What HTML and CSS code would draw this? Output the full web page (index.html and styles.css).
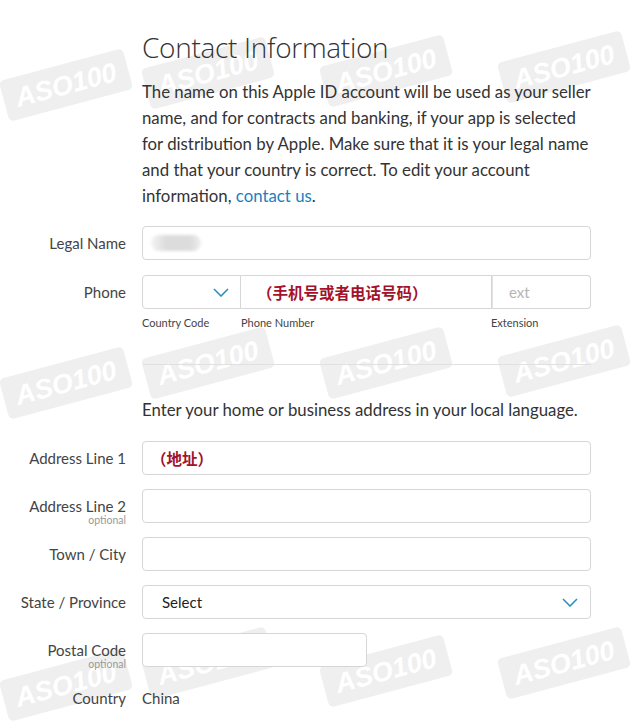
FILE: index.html
```html
<!DOCTYPE html>
<html lang="en">
<head>
    <meta charset="UTF-8">
    <meta name="viewport" content="width=device-width, initial-scale=1.0">
    <title>Contact Information</title>
    <link rel="stylesheet" href="styles.css">
</head>
<body>
    <div class="page">
        <div class="intro">
            <h1>Contact Information</h1>
            <p>The name on this Apple ID account will be used as your seller name, and for contracts and banking, if your app is selected for distribution by Apple. Make sure that it is your legal name and that your country is correct. To edit your account information, <a href="#">contact&nbsp;us</a>.</p>
        </div>

        <div class="form">
            <label class="label">Legal Name</label>
            <div class="field"><span class="blur"></span></div>

            <label class="label">Phone</label>
            <div class="phone">
                <div class="field phone-code">
                    <svg class="chevron" width="16" height="9" viewBox="0 0 16 9"><polyline points="1,1 8,8 15,1" fill="none" stroke="#2d8fc6" stroke-width="1.6"/></svg>
                </div>
                <div class="field phone-number"><span class="red">（手机号或者电话号码）</span></div>
                <div class="field phone-ext"><span class="placeholder">ext</span></div>
            </div>
            <span></span>
            <div class="phone-hints">
                <span class="hint-code">Country Code</span>
                <span class="hint-number">Phone Number</span>
                <span class="hint-ext">Extension</span>
            </div>
        </div>

        <hr class="divider">

        <p class="address-note">Enter your home or business address in your local language.</p>

        <div class="form address">
            <label class="label">Address Line 1</label>
            <div class="field"><span class="red">（地址）</span></div>

            <label class="label">Address Line 2<small>optional</small></label>
            <div class="field"></div>

            <label class="label">Town / City</label>
            <div class="field"></div>

            <label class="label">State / Province</label>
            <div class="field select">
                <span>Select</span>
                <svg class="chevron" width="16" height="9" viewBox="0 0 16 9"><polyline points="1,1 8,8 15,1" fill="none" stroke="#2d8fc6" stroke-width="1.6"/></svg>
            </div>

            <label class="label">Postal Code<small>optional</small></label>
            <div class="field postal"></div>

            <label class="label">Country</label>
            <div class="value">China</div>
        </div>
    </div>

    <div class="marks">
        <span class="mark" style="left:2px;top:64px">ASO100</span>
        <span class="mark" style="left:144px;top:52px">ASO100</span>
        <span class="mark" style="left:322px;top:50px">ASO100</span>
        <span class="mark" style="left:500px;top:46px">ASO100</span>
        <span class="mark" style="left:2px;top:362px">ASO100</span>
        <span class="mark" style="left:144px;top:342px">ASO100</span>
        <span class="mark" style="left:322px;top:342px">ASO100</span>
        <span class="mark" style="left:500px;top:340px">ASO100</span>
        <span class="mark" style="left:2px;top:664px">ASO100</span>
        <span class="mark" style="left:144px;top:642px">ASO100</span>
        <span class="mark" style="left:322px;top:650px">ASO100</span>
        <span class="mark" style="left:500px;top:642px">ASO100</span>
    </div>
</body>
</html>
```

FILE: styles.css
```css
body {
    margin: 0;
    background: #fff;
    color: #333;
    font-family: 'Lato', 'Noto Sans CJK SC', sans-serif;
    font-size: 16px;
}

.page {
    width: 591px;
    padding-top: 28px;
    position: relative;
    z-index: 1;
}

.intro {
    margin-left: 142px;
}

h1 {
    margin: 0;
    font-family: 'Open Sans', sans-serif;
    font-weight: 300;
    font-size: 28px;
    line-height: 38px;
    color: #333;
    letter-spacing: -0.3px;
}

.intro p {
    margin: 13px 0 0;
    font-size: 16.8px;
    line-height: 26px;
    color: #333;
}

.intro a {
    color: #1b7fbd;
    text-decoration: none;
}

.form {
    display: grid;
    grid-template-columns: 126px 449px;
    column-gap: 16px;
    row-gap: 15px;
    align-items: start;
}

.form.address {
    row-gap: 14px;
}

.intro + .form {
    margin-top: 17px;
}

.label {
    height: 34px;
    text-align: right;
    font-size: 15px;
    line-height: 34px;
    color: #444;
}

.label small {
    display: block;
    margin-top: -9px;
    font-size: 10.5px;
    line-height: 12px;
    color: #999;
}

.field {
    box-sizing: border-box;
    height: 34px;
    border: 1px solid #d6d6d6;
    border-radius: 4px;
    background: #fff;
    display: flex;
    align-items: center;
    padding: 0 8px;
}

.blur {
    width: 50px;
    height: 16px;
    border-radius: 8px;
    background: linear-gradient(90deg, #f4f4f4 0%, #dcdcdc 30%, #dcdcdc 80%, #efefef 100%);
    filter: blur(1.5px);
}

.red {
    color: #a3112b;
    font-weight: bold;
    font-family: 'Noto Sans CJK SC', sans-serif;
    font-size: 15.5px;
}

.phone {
    display: flex;
}

.phone .field {
    border-radius: 0;
}

.phone-code {
    width: 99px;
    border-radius: 4px 0 0 4px !important;
    justify-content: flex-end;
    padding-right: 11px;
}

.phone-number {
    width: 251px;
    border-left: none;
    padding-left: 16px;
}

.phone-ext {
    flex: 1;
    border-left: 1px solid #e2e2e2;
    border-radius: 0 4px 4px 0 !important;
    padding-left: 16px;
}

.phone-ext .placeholder {
    color: #b5b5b5;
    font-size: 15px;
}

.phone-hints {
    display: flex;
    font-size: 11px;
    color: #444;
    margin-top: -8px;
}

.hint-code {
    width: 99px;
}

.hint-number {
    width: 250px;
}

.divider {
    margin: 35px 0 0 143px;
    width: 448px;
    border: none;
    border-top: 1px solid #e0e0e0;
}

.address-note {
    margin: 35px 0 21px 142px;
    font-size: 16.8px;
    line-height: 20px;
}

.select {
    justify-content: space-between;
    padding: 0 12px 0 19px;
    font-size: 15px;
    color: #222;
}

.postal {
    width: 225px;
}

.value {
    font-size: 15px;
    line-height: 34px;
    color: #444;
}

.marks {
    position: absolute;
    inset: 0;
    pointer-events: none;
    z-index: 0;
}

.mark {
    position: absolute;
    width: 128px;
    height: 42px;
    line-height: 42px;
    text-align: center;
    background: #efefef;
    color: #fff;
    font-family: 'Liberation Sans', sans-serif;
    font-weight: bold;
    font-style: italic;
    font-size: 27px;
    border-radius: 5px;
    transform: rotate(-15deg);
}
```
